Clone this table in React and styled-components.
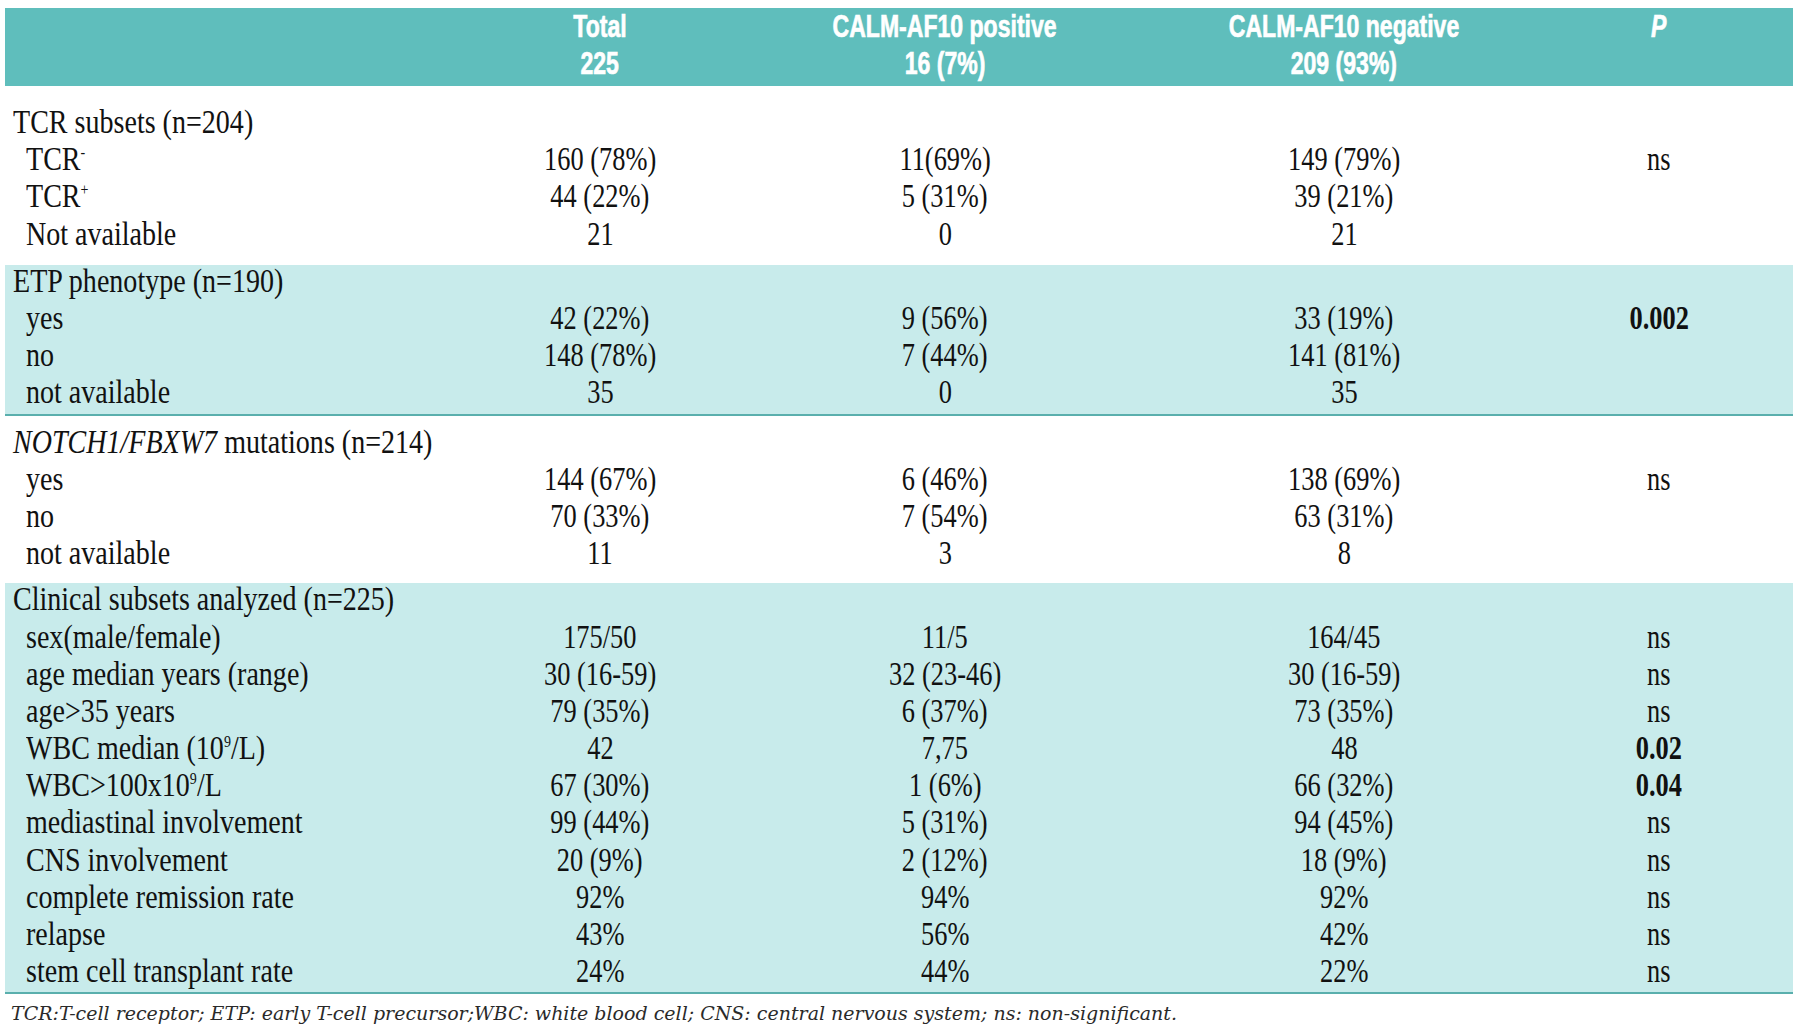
import React from "react";
import styled, { createGlobalStyle } from "styled-components";

const GlobalStyle = createGlobalStyle`
  html, body { margin: 0; padding: 0; background: #ffffff; }
  body { font-family: "Liberation Serif", "Times New Roman", serif; color: #111; }
`;

const COLS = "445px 300px 390px 408px 222px 1fr";

const Page = styled.div`
  width: 1788px;
  padding: 8px 7px 0 5px;
`;

const Table = styled.div`
  display: flex;
  flex-direction: column;
`;

const HeaderRow = styled.div`
  display: grid;
  grid-template-columns: ${COLS};
  height: 78px;
  background: #5fbebc;
  color: #ffffff;
  font-family: "Liberation Sans", Arial, sans-serif;
  font-weight: 700;
  font-size: 32px;
  -webkit-text-stroke: 0.7px #ffffff;
`;

const HeaderCell = styled.div`
  display: flex;
  flex-direction: column;
  align-items: center;
  line-height: 37px;
  font-style: ${(p) => (p.$italic ? "italic" : "normal")};
`;

const HeadText = styled.span`
  display: inline-block;
  white-space: nowrap;
  transform: scaleX(0.72);
  transform-origin: center;
`;

const Section = styled.div`
  background: ${(p) => (p.$band ? "#c8ebeb" : "#ffffff")};
  padding: ${(p) => p.$pad || "0"};
  border-bottom: ${(p) => (p.$line ? "2px solid #5aafad" : "none")};
`;

const Row = styled.div`
  display: grid;
  grid-template-columns: ${COLS};
  height: 37.2px;
  font-size: 33px;
  line-height: 37px;
`;

const LabelCell = styled.div`
  display: flex;
  align-items: center;
  padding-left: ${(p) => (p.$sub ? "21px" : "8px")};
  white-space: nowrap;
`;

const ValueCell = styled.div`
  display: flex;
  align-items: center;
  justify-content: center;
  white-space: nowrap;
  font-weight: ${(p) => (p.$bold ? 700 : 400)};
`;

const Narrow = styled.span`
  display: inline-block;
  white-space: nowrap;
  transform: scaleX(${(p) => p.$sx || 0.85});
  transform-origin: ${(p) => (p.$left ? "left center" : "center")};
  margin-top: -4px;
`;

const Sup = styled.sup`
  font-size: 0.5em;
  line-height: 0;
  vertical-align: 0.75em;
`;

const Footnote = styled.div`
  padding: 8px 0 0 6px;
  font-family: "DejaVu Serif", serif;
  font-style: italic;
  font-size: 19px;
  color: #2a2a2a;
  white-space: nowrap;
`;

const sections = [
  {
    title: "TCR subsets (n=204)",
    band: false,
    pad: "20px 0 10px",
    rows: [
      [<>TCR<Sup>-</Sup></>, "160 (78%)", "11(69%)", "149 (79%)", "ns"],
      [<>TCR<Sup>+</Sup></>, "44 (22%)", "5 (31%)", "39 (21%)", ""],
      ["Not available", "21", "0", "21", ""],
    ],
  },
  {
    title: "ETP phenotype (n=190)",
    band: true,
    rows: [
      ["yes", "42 (22%)", "9 (56%)", "33 (19%)", "0.002", true],
      ["no", "148 (78%)", "7 (44%)", "141 (81%)", ""],
      ["not available", "35", "0", "35", ""],
    ],
  },
  {
    title: <><i>NOTCH1/FBXW7</i> mutations (n=214)</>,
    band: false,
    pad: "10px 0 9px",
    rows: [
      ["yes", "144 (67%)", "6 (46%)", "138 (69%)", "ns"],
      ["no", "70 (33%)", "7 (54%)", "63 (31%)", ""],
      ["not available", "11", "3", "8", ""],
    ],
  },
  {
    title: "Clinical subsets analyzed (n=225)",
    band: true,
    rows: [
      ["sex(male/female)", "175/50", "11/5", "164/45", "ns"],
      ["age median years (range)", "30 (16-59)", "32 (23-46)", "30 (16-59)", "ns"],
      ["age>35 years", "79 (35%)", "6 (37%)", "73 (35%)", "ns"],
      [<>WBC median (10<Sup>9</Sup>/L)</>, "42", "7,75", "48", "0.02", true],
      [<>WBC&gt;100x10<Sup>9</Sup>/L</>, "67 (30%)", "1 (6%)", "66 (32%)", "0.04", true],
      ["mediastinal involvement", "99 (44%)", "5 (31%)", "94 (45%)", "ns"],
      ["CNS involvement", "20 (9%)", "2 (12%)", "18 (9%)", "ns"],
      ["complete remission rate", "92%", "94%", "92%", "ns"],
      ["relapse", "43%", "56%", "42%", "ns"],
      ["stem cell transplant rate", "24%", "44%", "22%", "ns"],
    ],
  },
];

const headers = [
  ["Total", "225"],
  ["CALM-AF10 positive", "16 (7%)"],
  ["CALM-AF10 negative", "209 (93%)"],
];

export default function App() {
  return (
    <>
      <GlobalStyle />
      <Page>
        <Table>
          <HeaderRow>
            <div />
            {headers.map(([a, b]) => (
              <HeaderCell key={a}>
                <HeadText>{a}</HeadText>
                <HeadText>{b}</HeadText>
              </HeaderCell>
            ))}
            <HeaderCell $italic>
              <HeadText>P</HeadText>
            </HeaderCell>
            <div />
          </HeaderRow>
          {sections.map((s, si) => (
            <Section key={si} $band={s.band} $line={s.band} $pad={s.pad}>
              <Row>
                <LabelCell>
                  <Narrow $left>{s.title}</Narrow>
                </LabelCell>
              </Row>
              {s.rows.map((r, ri) => (
                <Row key={ri}>
                  <LabelCell $sub>
                    <Narrow $left>{r[0]}</Narrow>
                  </LabelCell>
                  <ValueCell><Narrow $sx={0.8}>{r[1]}</Narrow></ValueCell>
                  <ValueCell><Narrow $sx={0.8}>{r[2]}</Narrow></ValueCell>
                  <ValueCell><Narrow $sx={0.8}>{r[3]}</Narrow></ValueCell>
                  <ValueCell $bold={r[5]}><Narrow $sx={0.8}>{r[4]}</Narrow></ValueCell>
                  <div />
                </Row>
              ))}
            </Section>
          ))}
        </Table>
        <Footnote>
          TCR:T-cell receptor; ETP: early T-cell precursor;WBC: white blood cell; CNS: central nervous system; ns: non-significant.
        </Footnote>
      </Page>
    </>
  );
}
